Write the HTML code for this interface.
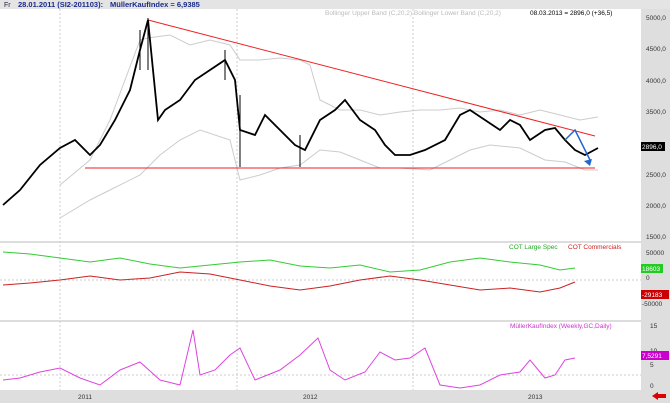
<!DOCTYPE html><html><head><style>
body{margin:0;width:670px;height:403px;overflow:hidden;background:#fff;font-family:"Liberation Sans",sans-serif}
</style></head><body>
<svg width="670" height="403" xmlns="http://www.w3.org/2000/svg" font-family="Liberation Sans, sans-serif">
<rect width="670" height="403" fill="#fff"/>
<rect x="0" y="0" width="670" height="9" fill="#e4e4e4"/>
<text x="4" y="7" font-size="7" fill="#224">Fr</text>
<text x="18" y="7" font-size="7.5" font-weight="bold" fill="#1a2a8a">28.01.2011 (SI2-201103):</text>
<text x="110" y="7" font-size="7.5" font-weight="bold" fill="#1a2a8a">MüllerKaufIndex = 6,9385</text>
<rect x="641" y="9" width="29" height="394" fill="#dedede"/>
<rect x="0" y="390" width="670" height="13" fill="#dedede"/>
<line x1="0" y1="242" x2="641" y2="242" stroke="#bbb"/>
<line x1="0" y1="321" x2="641" y2="321" stroke="#bbb"/>
<g stroke="#ccc" stroke-dasharray="2,2">
<line x1="60" y1="9" x2="60" y2="390"/><line x1="237" y1="9" x2="237" y2="390"/><line x1="413" y1="9" x2="413" y2="390"/><line x1="0" y1="280" x2="641" y2="280"/><line x1="0" y1="375" x2="641" y2="375"/>
</g>
<text x="325" y="15" font-size="6.5" fill="#bbb">Bollinger Upper Band (C,20,2)  Bollinger Lower Band (C,20,2)</text>
<text x="530" y="15" font-size="6.5" fill="#000">08.03.2013 = 2896,0 (+36,5)</text>
<g font-size="6.5" fill="#333">
<text x="646" y="20">5000,0</text><text x="646" y="51">4500,0</text><text x="646" y="83">4000,0</text><text x="646" y="114">3500,0</text><text x="646" y="177">2500,0</text><text x="646" y="208">2000,0</text><text x="646" y="239">1500,0</text>
<text x="646" y="255">50000</text><text x="646" y="280">0</text><text x="642" y="306">-50000</text>
<text x="650" y="328">15</text><text x="650" y="353">10</text><text x="650" y="367">5</text><text x="650" y="388">0</text>
<text x="78" y="399">2011</text><text x="303" y="399">2012</text><text x="528" y="399">2013</text>
</g>
<rect x="641" y="142" width="24" height="9" fill="#000"/><text x="642" y="149" font-size="6.5" fill="#fff">2896,0</text>
<rect x="641" y="264" width="22" height="9" fill="#2c2"/><text x="642" y="271" font-size="6.5" fill="#fff">18603</text>
<rect x="641" y="290" width="28" height="9" fill="#c00"/><text x="642" y="297" font-size="6.5" fill="#fff">-29183</text>
<rect x="641" y="351" width="28" height="9" fill="#c0c"/><text x="642" y="358" font-size="6.5" fill="#fff">7,5291</text>
<path d="M652 396 l6 -4 v2 h8 v4 h-8 v2z" fill="#d00"/>
<polyline fill="none" stroke="#ccc" points="60,185 90,160 110,120 140,40 148,38 170,35 190,45 210,40 230,45 240,60 260,60 280,58 300,60 310,65 320,100 340,110 360,110 380,115 400,112 420,110 440,110 460,108 480,112 500,110 520,115 540,110 560,115 580,120 598,117"/>
<polyline fill="none" stroke="#ccc" points="60,218 90,200 110,190 140,175 160,155 180,140 200,130 230,140 240,180 260,175 280,168 300,165 320,150 340,152 360,160 380,168 400,168 430,170 450,160 470,150 490,145 520,148 545,160 565,162 585,170 598,170"/>
<line x1="148" y1="20" x2="595" y2="136" stroke="#e22" stroke-width="1"/>
<line x1="85" y1="168" x2="595" y2="168" stroke="#e22" stroke-width="1"/>
<polyline fill="none" stroke="#000" stroke-width="1.8" points="3,205 20,190 40,165 60,148 75,140 90,155 100,145 115,120 130,90 140,50 148,20 152,60 158,120 165,110 180,100 195,80 210,70 225,60 235,80 240,130 255,135 265,115 280,130 295,145 305,150 320,120 335,110 345,100 360,120 375,130 385,145 395,155 410,155 425,150 445,140 460,115 470,110 485,120 500,130 510,120 520,125 530,140 545,130 555,128 565,140 575,150 585,155 598,148"/>
<g stroke="#000"><line x1="140" y1="30" x2="140" y2="70"/><line x1="148" y1="18" x2="148" y2="70"/><line x1="240" y1="95" x2="240" y2="167"/><line x1="300" y1="135" x2="300" y2="167"/><line x1="225" y1="50" x2="225" y2="80"/></g>
<polyline fill="none" stroke="#26c" stroke-width="1.5" points="565,140 575,130 590,160"/><path d="M590 166 l-6 -5 l8 -2z" fill="#26c"/>
<text x="509" y="249" font-size="6.5" fill="#2a2">COT Large Spec</text><text x="568" y="249" font-size="6.5" fill="#c22">COT Commercials</text>
<polyline fill="none" stroke="#3c3" points="3,252 30,254 60,258 90,262 120,258 150,264 180,268 210,265 240,262 270,260 300,266 330,268 360,265 390,272 420,270 450,262 480,258 510,262 540,265 560,270 575,268"/>
<polyline fill="none" stroke="#c22" points="3,285 30,283 60,280 90,276 120,280 150,278 180,272 210,274 240,280 270,286 300,290 330,286 360,280 390,276 420,280 450,285 480,290 510,288 540,292 560,288 575,282"/>
<text x="510" y="328" font-size="6.5" fill="#c3c">MüllerKaufIndex (Weekly,GC,Daily)</text>
<polyline fill="none" stroke="#d4d" points="3,380 20,378 40,372 60,368 80,378 100,385 120,370 140,362 160,380 180,385 193,330 200,375 215,370 230,355 240,348 255,380 280,370 300,355 318,338 330,370 345,380 365,372 380,352 395,360 410,358 425,348 440,385 460,388 480,385 500,375 520,372 530,360 545,378 555,375 565,360 575,358"/>
</svg>
</body></html>
